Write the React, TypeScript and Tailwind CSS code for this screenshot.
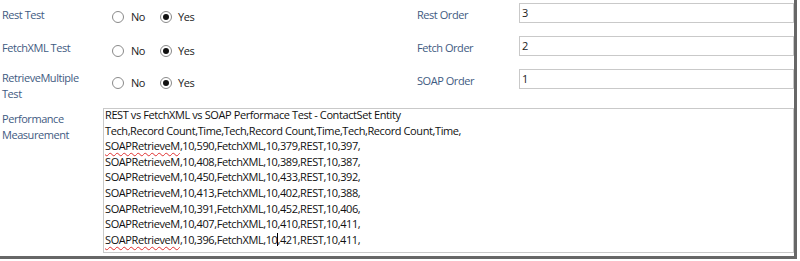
import React from "react";

const Radio = ({ checked }: { checked?: boolean }) => (
  <span className="w-[12px] h-[12px] rounded-full border border-[#8a8a8a] bg-white flex items-center justify-center">
    {checked && <span className="w-[6px] h-[6px] rounded-full bg-[#111]" />}
  </span>
);

const YesNo = ({ mt }: { mt: string }) => (
  <div className={`flex items-center text-[#222] ${mt}`}>
    <Radio />
    <span className="ml-[7px] w-[29px]">No</span>
    <Radio checked />
    <span className="ml-[6px]">Yes</span>
  </div>
);

const Spell = ({ children }: { children: React.ReactNode }) => (
  <span className="underline decoration-wavy decoration-[#e03030] decoration-1 underline-offset-2">
    {children}
  </span>
);

const rows = [
  ["10,590", "10,379", "10,397"],
  ["10,408", "10,389", "10,387"],
  ["10,450", "10,433", "10,392"],
  ["10,413", "10,402", "10,388"],
  ["10,391", "10,452", "10,406"],
  ["10,407", "10,410", "10,411"],
];

export default function App() {
  return (
    <div className="w-[800px] h-[261px] bg-white" style={{ fontFamily: '"Open Sans", "Liberation Sans", sans-serif' }}>
      <div className="w-[797px] h-[259px] border-r-[3px] border-b-[3px] border-[#676767] flex flex-col text-[11px] tracking-[-0.45px] leading-[16px]">
        {/* row 1 */}
        <div className="flex h-[33px]">
          <div className="w-[112px] pl-[2px] mt-[7px] text-[#3f5b82]">Rest Test</div>
          <div className="w-[305px]">
            <YesNo mt="mt-[9px]" />
          </div>
          <div className="w-[102px] mt-[7px] text-[#3f5b82]">Rest Order</div>
          <div className="flex-1 mt-[3px] h-[20px] border border-[#c9c9c9] pl-[2px] leading-[18px] text-[#222]">3</div>
        </div>
        {/* row 2 */}
        <div className="flex h-[33px]">
          <div className="w-[112px] pl-[2px] mt-[7px] text-[#3f5b82]">FetchXML Test</div>
          <div className="w-[305px]">
            <YesNo mt="mt-[10px]" />
          </div>
          <div className="w-[102px] mt-[7px] text-[#3f5b82]">Fetch Order</div>
          <div className="flex-1 mt-[3px] h-[20px] border border-[#c9c9c9] pl-[2px] leading-[18px] text-[#222]">2</div>
        </div>
        {/* row 3 */}
        <div className="flex h-[42px]">
          <div className="w-[112px] pl-[2px] mt-[4px] text-[#3f5b82]">
            RetrieveMultiple
            <br />
            Test
          </div>
          <div className="w-[305px]">
            <YesNo mt="mt-[9px]" />
          </div>
          <div className="w-[102px] mt-[7px] text-[#3f5b82]">SOAP Order</div>
          <div className="flex-1 mt-[3px] h-[20px] border border-[#c9c9c9] pl-[2px] leading-[18px] text-[#222]">1</div>
        </div>
        {/* performance */}
        <div className="flex">
          <div className="w-[103px] pl-[2px] mt-[3px] text-[#3f5b82]">
            Performance
            <br />
            Measurement
          </div>
          <div className="flex-1 h-[145px] border border-[#c9c9c9] pl-[1px] text-[#111] leading-[15.6px] overflow-hidden">
            <div className="-mt-[2px] tracking-[-0.4px]">
              <div>REST vs FetchXML vs SOAP Performace Test - ContactSet Entity</div>
              <div>Tech,Record Count,Time,Tech,Record Count,Time,Tech,Record Count,Time,</div>
              {rows.map((r, i) => (
                <div key={i}>
                  {i === 0 ? <Spell>SOAPRetrieveM</Spell> : "SOAPRetrieveM"},{r[0]},FetchXML,{r[1]},REST,{r[2]},
                </div>
              ))}
              <div>
                <Spell>SOAPRetrieveM</Spell>,10,396,FetchXML,10
                <span className="inline-block w-[1px] h-[13px] bg-black align-[-2px] -mr-[1px]" />
                ,421,REST,10,411,
              </div>
            </div>
          </div>
        </div>
      </div>
    </div>
  );
}
